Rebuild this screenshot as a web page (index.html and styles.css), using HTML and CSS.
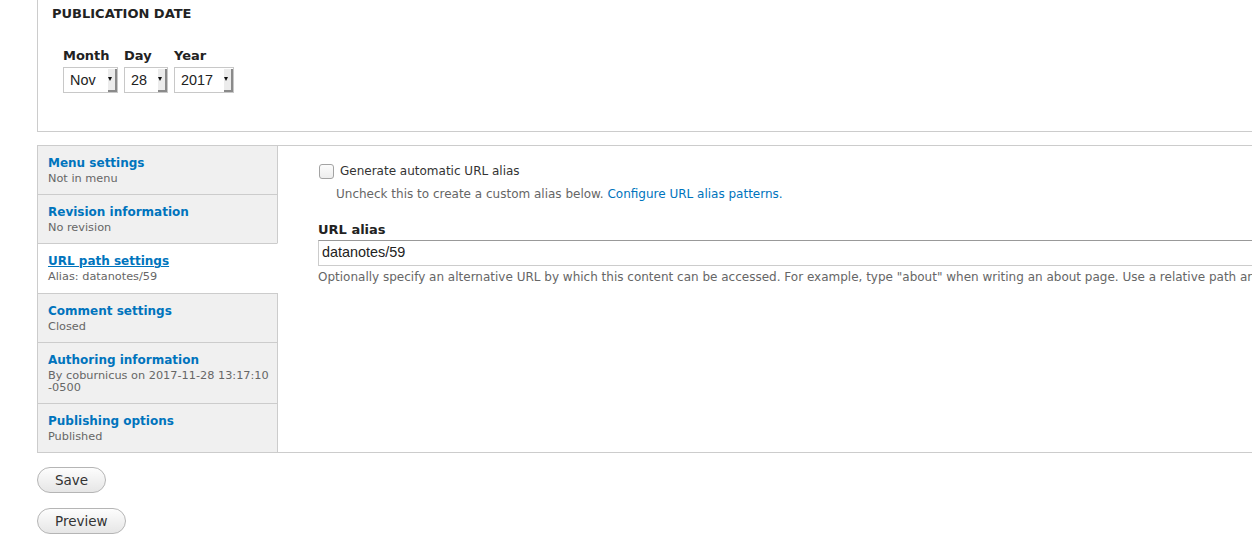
FILE: index.html
```html
<!DOCTYPE html>
<html>
<head>
<meta charset="utf-8">
<link rel="stylesheet" href="styles.css">
</head>
<body>
<div class="page">
  <div class="pubdate">
    <h2 class="legend">PUBLICATION DATE</h2>
    <div class="date-row">
      <div class="date-field">
        <div class="date-label">Month</div>
        <div class="select w-month"><span class="select-value">Nov</span><span class="arrow"></span></div>
      </div>
      <div class="date-field">
        <div class="date-label">Day</div>
        <div class="select w-day"><span class="select-value">28</span><span class="arrow"></span></div>
      </div>
      <div class="date-field">
        <div class="date-label">Year</div>
        <div class="select w-year"><span class="select-value">2017</span><span class="arrow"></span></div>
      </div>
    </div>
  </div>

  <div class="vtabs">
    <ul class="vtabs-menu">
      <li class="tab"><a class="tab-title" href="#">Menu settings</a><span class="tab-summary">Not in menu</span></li>
      <li class="tab"><a class="tab-title" href="#">Revision information</a><span class="tab-summary">No revision</span></li>
      <li class="tab selected"><a class="tab-title" href="#">URL path settings</a><span class="tab-summary">Alias: datanotes/59</span></li>
      <li class="tab"><a class="tab-title" href="#">Comment settings</a><span class="tab-summary">Closed</span></li>
      <li class="tab"><a class="tab-title" href="#">Authoring information</a><span class="tab-summary">By coburnicus on 2017-11-28 13:17:10 -0500</span></li>
      <li class="tab"><a class="tab-title" href="#">Publishing options</a><span class="tab-summary">Published</span></li>
    </ul>
    <div class="panel">
      <div class="check-row">
        <span class="checkbox"></span>
        <span class="check-label">Generate automatic URL alias</span>
      </div>
      <div class="check-desc">Uncheck this to create a custom alias below. <a class="link" href="#">Configure URL alias patterns.</a></div>
      <div class="field-label">URL alias</div>
      <div class="text-input">datanotes/59</div>
      <div class="field-desc">Optionally specify an alternative URL by which this content can be accessed. For example, type "about" when writing an about page. Use a relative path and don't add a trailing slash or the URL alias won't work.</div>
    </div>
  </div>

  <div class="actions">
    <button class="btn">Save</button>
    <button class="btn">Preview</button>
  </div>
</div>
</body>
</html>
```

FILE: styles.css
```css
html, body {
  margin: 0;
  padding: 0;
  overflow: hidden;
  background: #fff;
}

body {
  font-family: "DejaVu Sans", Verdana, sans-serif;
  color: #222;
}

.page {
  width: 1500px;
  padding-left: 37px;
}

.pubdate {
  border: 1px solid #ccc;
  border-top: none;
  padding: 6px 14px 38px 14px;
}

.legend {
  margin: 0;
  font-size: 13px;
  line-height: 16px;
  font-weight: bold;
  color: #222;
}

.date-row {
  display: flex;
  gap: 6px;
  margin-top: 26px;
  padding-left: 11px;
}

.date-label {
  font-size: 13px;
  line-height: 16px;
  font-weight: bold;
  color: #222;
  margin-bottom: 3px;
}

.select {
  position: relative;
  box-sizing: border-box;
  height: 26px;
  border: 1px solid #c8c8c8;
  background: #fff;
  font-family: "Liberation Sans", Arial, sans-serif;
  font-size: 14.4px;
  line-height: 24px;
  color: #222;
  padding-left: 6px;
}

.w-month { width: 55px; }
.w-day { width: 44px; }
.w-year { width: 60px; }

.arrow {
  position: absolute;
  right: 0;
  top: 1px;
  bottom: 0;
  width: 9px;
  background: #ececec;
  border-right: 2px solid #8a8a8a;
  border-bottom: 2px solid #8a8a8a;
  box-sizing: border-box;
}

.arrow::before {
  content: "";
  position: absolute;
  left: 0;
  top: 8px;
  border-left: 2.5px solid transparent;
  border-right: 2.5px solid transparent;
  border-top: 4px solid #111;
}

.vtabs {
  margin-top: 13px;
  display: flex;
  border: 1px solid #ccc;
}

.vtabs-menu {
  list-style: none;
  margin: 0;
  padding: 0;
  width: 240px;
  flex: none;
}

.tab {
  background: #f0f0f0;
  border-right: 1px solid #ccc;
  padding: 9px 5px 9px 10px;
}

.tab + .tab {
  border-top: 1px solid #ccc;
}

.tab.selected {
  background: #fff;
  border-right-color: #fff;
  padding-bottom: 10px;
}

.tab-title {
  display: block;
  font-size: 12px;
  line-height: 16px;
  font-weight: bold;
  color: #0074bd;
  text-decoration: none;
}

.tab.selected .tab-title {
  text-decoration: underline;
}

.tab-summary {
  display: block;
  margin-top: 2px;
  font-size: 11.3px;
  line-height: 12px;
  color: #666;
}

.panel {
  flex: 1;
  padding: 17px 40px 20px 40px;
}

.check-row {
  display: flex;
  align-items: center;
  gap: 6px;
  height: 16px;
}

.checkbox {
  box-sizing: border-box;
  width: 15px;
  height: 15px;
  margin-left: 1px;
  border: 1px solid #a3a3a3;
  border-radius: 3px;
  background: linear-gradient(#fcfcfc, #ededed);
}

.check-label {
  font-size: 12px;
  line-height: 16px;
  color: #333;
}

.check-desc {
  margin-top: 7px;
  padding-left: 18px;
  font-size: 12px;
  line-height: 16px;
  color: #666;
}

.link {
  color: #0074bd;
  text-decoration: none;
}

.field-label {
  margin-top: 20px;
  font-size: 13px;
  line-height: 16px;
  font-weight: bold;
  color: #222;
}

.text-input {
  margin-top: 2px;
  box-sizing: border-box;
  height: 26px;
  border: 1px solid #ccc;
  border-top-color: #999;
  padding: 0 3px;
  font-family: "Liberation Sans", Arial, sans-serif;
  font-size: 14.4px;
  line-height: 23px;
  color: #222;
}

.field-desc {
  margin-top: 3px;
  font-size: 12px;
  line-height: 16px;
  color: #666;
  white-space: nowrap;
}

.actions {
  display: flex;
  flex-direction: column;
  align-items: flex-start;
  gap: 15px;
  margin-top: 14px;
}

.btn {
  box-sizing: border-box;
  height: 26px;
  padding: 0 17px;
  border: 1px solid #b5b5b5;
  border-radius: 20px;
  background: linear-gradient(#fdfdfd, #e6e6e6);
  font-family: "DejaVu Sans", Verdana, sans-serif;
  font-size: 13.5px;
  line-height: 24px;
  color: #333;
}
```
